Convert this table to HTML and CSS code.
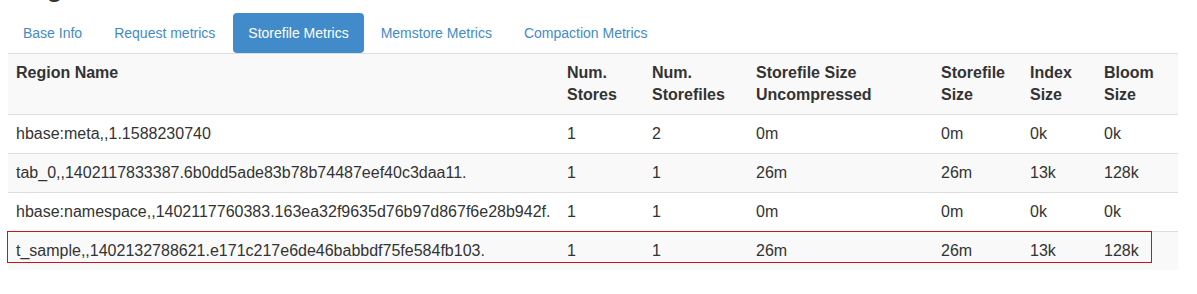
FILE: index.html
```html
<!DOCTYPE html>
<html>
<head>
<meta charset="utf-8">
<link rel="stylesheet" href="styles.css">
</head>
<body>
<div class="container">
  <h2 class="title">Regions</h2>
  <ul class="nav-pills">
    <li><a href="#">Base Info</a></li>
    <li class="wide"><a href="#">Request metrics</a></li>
    <li class="active"><a href="#">Storefile Metrics</a></li>
    <li><a href="#">Memstore Metrics</a></li>
    <li><a href="#">Compaction Metrics</a></li>
  </ul>
  <div class="table-wrap">
    <table class="regions">
      <colgroup>
        <col class="c-name"><col class="c-stores"><col class="c-files"><col class="c-unc"><col class="c-size"><col class="c-index"><col class="c-bloom">
      </colgroup>
      <tbody>
        <tr>
          <th>Region Name</th><th>Num.<br>Stores</th><th>Num.<br>Storefiles</th><th>Storefile Size<br>Uncompressed</th><th>Storefile<br>Size</th><th>Index<br>Size</th><th>Bloom<br>Size</th>
        </tr>
        <tr>
          <td>hbase:meta,,1.1588230740</td><td>1</td><td>2</td><td>0m</td><td>0m</td><td>0k</td><td>0k</td>
        </tr>
        <tr>
          <td>tab_0,,1402117833387.6b0dd5ade83b78b74487eef40c3daa11.</td><td>1</td><td>1</td><td>26m</td><td>26m</td><td>13k</td><td>128k</td>
        </tr>
        <tr>
          <td>hbase:namespace,,1402117760383.163ea32f9635d76b97d867f6e28b942f.</td><td>1</td><td>1</td><td>0m</td><td>0m</td><td>0k</td><td>0k</td>
        </tr>
        <tr>
          <td>t_sample,,1402132788621.e171c217e6de46babbdf75fe584fb103.</td><td>1</td><td>1</td><td>26m</td><td>26m</td><td>13k</td><td>128k</td>
        </tr>
      </tbody>
    </table>
    <div class="highlight"></div>
  </div>
</div>
</body>
</html>
```
FILE: styles.css
```css
html, body {
  margin: 0;
  padding: 0;
  background: #fff;
}
body {
  font-family: "Liberation Sans", Arial, sans-serif;
  font-size: 14px;
  color: #333;
}
.container {
  width: 1170px;
  margin-left: 8px;
}
.title {
  font-family: "Liberation Sans", Arial, sans-serif;
  font-size: 30px;
  font-weight: normal;
  line-height: 33px;
  height: 33px;
  margin: -31px 0 11px 0;
  color: #333;
}
.nav-pills {
  list-style: none;
  margin: 0;
  padding: 0;
  display: flex;
  border-bottom: 1px solid #ddd;
}
.nav-pills li {
  margin-right: 2px;
}
.nav-pills a {
  display: block;
  padding: 10px 15px;
  line-height: 20px;
  color: #428bca;
  text-decoration: none;
  border-radius: 4px;
}
.nav-pills li.active a {
  background: #428bca;
  color: #fff;
}
.nav-pills li.wide a {
  padding-right: 16px;
}
.table-wrap {
  position: relative;
}
.regions {
  width: 1170px;
  border-collapse: collapse;
  table-layout: fixed;
  font-size: 16px;
  line-height: 22px;
}
.c-name { width: 551px; }
.c-stores { width: 85px; }
.c-files { width: 104px; }
.c-unc { width: 185px; }
.c-size { width: 89px; }
.c-index { width: 74px; }
.c-bloom { width: 82px; }
.regions th,
.regions td {
  padding: 8px;
  text-align: left;
  vertical-align: top;
  border-top: 1px solid #ddd;
  white-space: nowrap;
}
.regions tr:first-child th {
  border-top: none;
}
.regions th {
  font-weight: bold;
}
.regions tr:nth-child(odd) {
  background: #f9f9f9;
}
.highlight {
  position: absolute;
  z-index: 2;
  left: -1px;
  top: 177px;
  width: 1143px;
  height: 30px;
  border: 1px solid #c8141e;
}
```
